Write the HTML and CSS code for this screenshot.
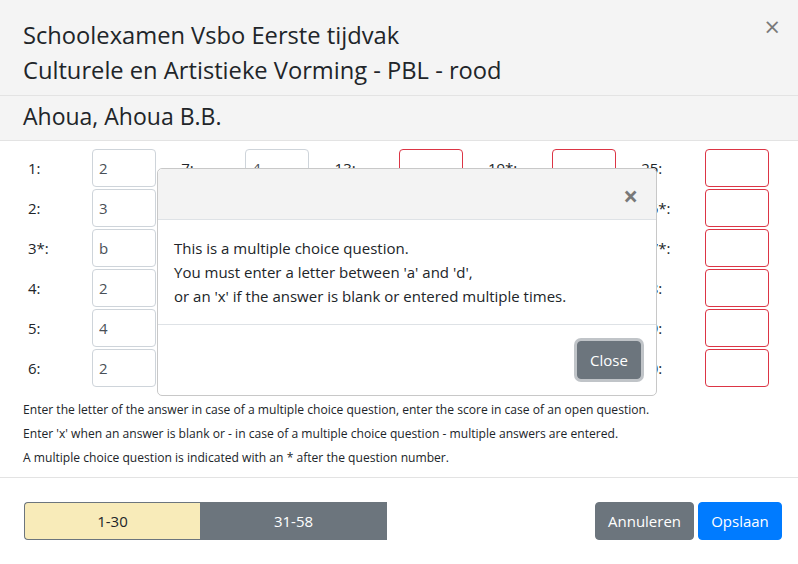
FILE: index.html
```html
<!DOCTYPE html>
<html lang="nl">
<head>
<meta charset="utf-8">
<title>Schoolexamen</title>
<link rel="stylesheet" href="styles.css">
</head>
<body>
<div class="modal">
  <div class="m-header">
    <h4 class="m-title">Schoolexamen Vsbo Eerste tijdvak<br>Culturele en Artistieke Vorming - PBL - rood</h4>
    <button class="close" type="button">&times;</button>
  </div>
  <div class="m-student">Ahoua, Ahoua B.B.</div>
  <div class="m-body">
    <div class="grid">
      <div class="col">
        <div class="row"><span class="lbl">1:</span><input class="inp" value="2"></div>
        <div class="row"><span class="lbl">2:</span><input class="inp" value="3"></div>
        <div class="row"><span class="lbl">3*:</span><input class="inp" value="b"></div>
        <div class="row"><span class="lbl">4:</span><input class="inp" value="2"></div>
        <div class="row"><span class="lbl">5:</span><input class="inp" value="4"></div>
        <div class="row"><span class="lbl">6:</span><input class="inp" value="2"></div>
      </div>
      <div class="col">
        <div class="row"><span class="lbl">7:</span><input class="inp" value="4"></div>
        <div class="row"><span class="lbl">8:</span><input class="inp" value="3"></div>
        <div class="row"><span class="lbl">9*:</span><input class="inp" value="a"></div>
        <div class="row"><span class="lbl">10:</span><input class="inp" value="2"></div>
        <div class="row"><span class="lbl">11:</span><input class="inp" value="1"></div>
        <div class="row"><span class="lbl">12:</span><input class="inp" value="3"></div>
      </div>
      <div class="col">
        <div class="row"><span class="lbl">13:</span><input class="inp invalid" value=""></div>
        <div class="row"><span class="lbl">14:</span><input class="inp invalid" value=""></div>
        <div class="row"><span class="lbl">15:</span><input class="inp invalid" value=""></div>
        <div class="row"><span class="lbl">16*:</span><input class="inp invalid" value=""></div>
        <div class="row"><span class="lbl">17:</span><input class="inp invalid" value=""></div>
        <div class="row"><span class="lbl">18:</span><input class="inp invalid" value=""></div>
      </div>
      <div class="col">
        <div class="row"><span class="lbl">19*:</span><input class="inp invalid" value=""></div>
        <div class="row"><span class="lbl">20:</span><input class="inp invalid" value=""></div>
        <div class="row"><span class="lbl">21:</span><input class="inp invalid" value=""></div>
        <div class="row"><span class="lbl">22:</span><input class="inp invalid" value=""></div>
        <div class="row"><span class="lbl">23:</span><input class="inp invalid" value=""></div>
        <div class="row"><span class="lbl">24:</span><input class="inp invalid" value=""></div>
      </div>
      <div class="col">
        <div class="row"><span class="lbl">25:</span><input class="inp invalid" value=""></div>
        <div class="row"><span class="lbl">26*:</span><input class="inp invalid" value=""></div>
        <div class="row"><span class="lbl">27*:</span><input class="inp invalid" value=""></div>
        <div class="row"><span class="lbl">28:</span><input class="inp invalid" value=""></div>
        <div class="row"><span class="lbl">29:</span><input class="inp invalid" value=""></div>
        <div class="row"><span class="lbl">30:</span><input class="inp invalid" value=""></div>
      </div>
    </div>
    <div class="help">
      <p>Enter the letter of the answer in case of a multiple choice question, enter the score in case of an open question.</p>
      <p>Enter 'x' when an answer is blank or - in case of a multiple choice question - multiple answers are entered.</p>
      <p>A multiple choice question is indicated with an * after the question number.</p>
    </div>
  </div>
  <div class="m-footer">
    <div class="tabs">
      <button class="tab tab-active" type="button">1-30</button>
      <button class="tab tab-other" type="button">31-58</button>
    </div>
    <div class="actions">
      <button class="btn btn-secondary btn-cancel" type="button">Annuleren</button>
      <button class="btn btn-primary btn-save" type="button">Opslaan</button>
    </div>
  </div>

  <div class="dialog">
    <div class="d-header">
      <button class="close d-close" type="button">&times;</button>
    </div>
    <div class="d-body">
      This is a multiple choice question.<br>
      You must enter a letter between 'a' and 'd',<br>
      or an 'x' if the answer is blank or entered multiple times.
    </div>
    <div class="d-footer">
      <button class="btn btn-secondary btn-close-focus" type="button">Close</button>
    </div>
  </div>
</div>
</body>
</html>
```

FILE: styles.css
```css
* { box-sizing: border-box; }
html, body { margin: 0; padding: 0; }
body {
  font-family: "Open Sans", "Noto Sans", sans-serif;
  color: #212529;
  background: #fff;
  width: 798px;
  height: 564px;
  overflow: hidden;
}
.modal {
  position: relative;
  width: 798px;
  height: 564px;
  background: #fff;
}
.m-header {
  display: flex;
  align-items: flex-start;
  justify-content: space-between;
  background: #f4f4f4;
  padding: 18px 18px 7px 23px;
  border-bottom: 1px solid #e3e3e3;
  height: 96px;
}
.m-title {
  margin: 0;
  font-size: 23.7px;
  font-weight: 400;
  line-height: 35px;
}
.close {
  border: 0;
  background: transparent;
  padding: 0;
  font-family: "Open Sans", sans-serif;
  font-size: 26px;
  font-weight: 700;
  line-height: 24px;
  color: #000;
  opacity: .5;
  cursor: pointer;
}
.m-header .close {
  margin-top: -3px;
  font-size: 27px;
  font-weight: 400;
}
.m-student {
  background: #f4f4f4;
  font-size: 23px;
  font-weight: 500;
  line-height: 30px;
  padding: 5px 23px 9px;
  border-bottom: 1px solid #e3e3e3;
  height: 45px;
}
.m-body {
  padding: 8px 0 7px 0;
  border-bottom: 1px solid #e3e3e3;
}
.grid {
  display: flex;
  gap: 25.3px;
  padding-left: 28px;
}
.col {
  display: flex;
  flex-direction: column;
  gap: 2px;
}
.row {
  display: flex;
  align-items: center;
  height: 38px;
}
.lbl {
  width: 64px;
  font-size: 15px;
}
.inp {
  width: 64px;
  height: 38px;
  border: 1px solid #ced4da;
  border-radius: 4px;
  padding: 0 6px;
  font-family: "Open Sans", sans-serif;
  font-size: 15px;
  color: #495057;
  background: #fff;
}
.inp.invalid { border-color: #dc3545; }
.help {
  margin-top: 11px;
  padding-left: 23px;
  font-size: 12.1px;
  line-height: 24px;
}
.help p { margin: 0; }
.m-footer {
  display: flex;
  justify-content: space-between;
  align-items: center;
  padding: 24px 16px 23px 24px;
}
.tabs { display: flex; }
.tab {
  height: 38px;
  font-family: "Open Sans", sans-serif;
  font-size: 15px;
  border: 1px solid #6c757d;
  cursor: pointer;
}
.tab-active {
  width: 176px;
  background: #f8ebb9;
  color: #212529;
  border-radius: 4px 0 0 4px;
  border-right: 0;
}
.tab-other {
  width: 187px;
  background: #6c757d;
  color: #fff;
  border-radius: 0;
}
.actions { display: flex; gap: 4px; }
.btn {
  height: 38px;
  border: 1px solid transparent;
  border-radius: 4px;
  font-family: "Open Sans", sans-serif;
  font-size: 15px;
  color: #fff;
  padding: 0 12px;
  cursor: pointer;
}
.btn-secondary { background: #6c757d; border-color: #6c757d; }
.btn-primary { background: #007bff; border-color: #007bff; }
.btn-cancel { width: 99px; }
.btn-save { width: 84px; }

.dialog {
  position: absolute;
  left: 157px;
  top: 168px;
  width: 500px;
  height: 228px;
  background: #fff;
  border: 1px solid #c8c8c8;
  border-radius: 5px;
  display: flex;
  flex-direction: column;
}
.d-header {
  height: 51px;
  background: #f3f3f3;
  border-bottom: 1px solid #dee2e6;
  border-radius: 5px 5px 0 0;
  display: flex;
  justify-content: flex-end;
  align-items: center;
  padding: 4px 18px 0 0;
}
.d-body {
  padding: 16px 16px;
  font-size: 15px;
  line-height: 24px;
  border-bottom: 1px solid #dee2e6;
}
.d-footer {
  flex: 1;
  display: flex;
  justify-content: flex-end;
  align-items: flex-start;
  padding: 16px 15px 0 0;
}
.btn-close-focus {
  width: 64px;
  box-shadow: 0 0 0 3px rgba(130, 138, 145, .5);
}
```
